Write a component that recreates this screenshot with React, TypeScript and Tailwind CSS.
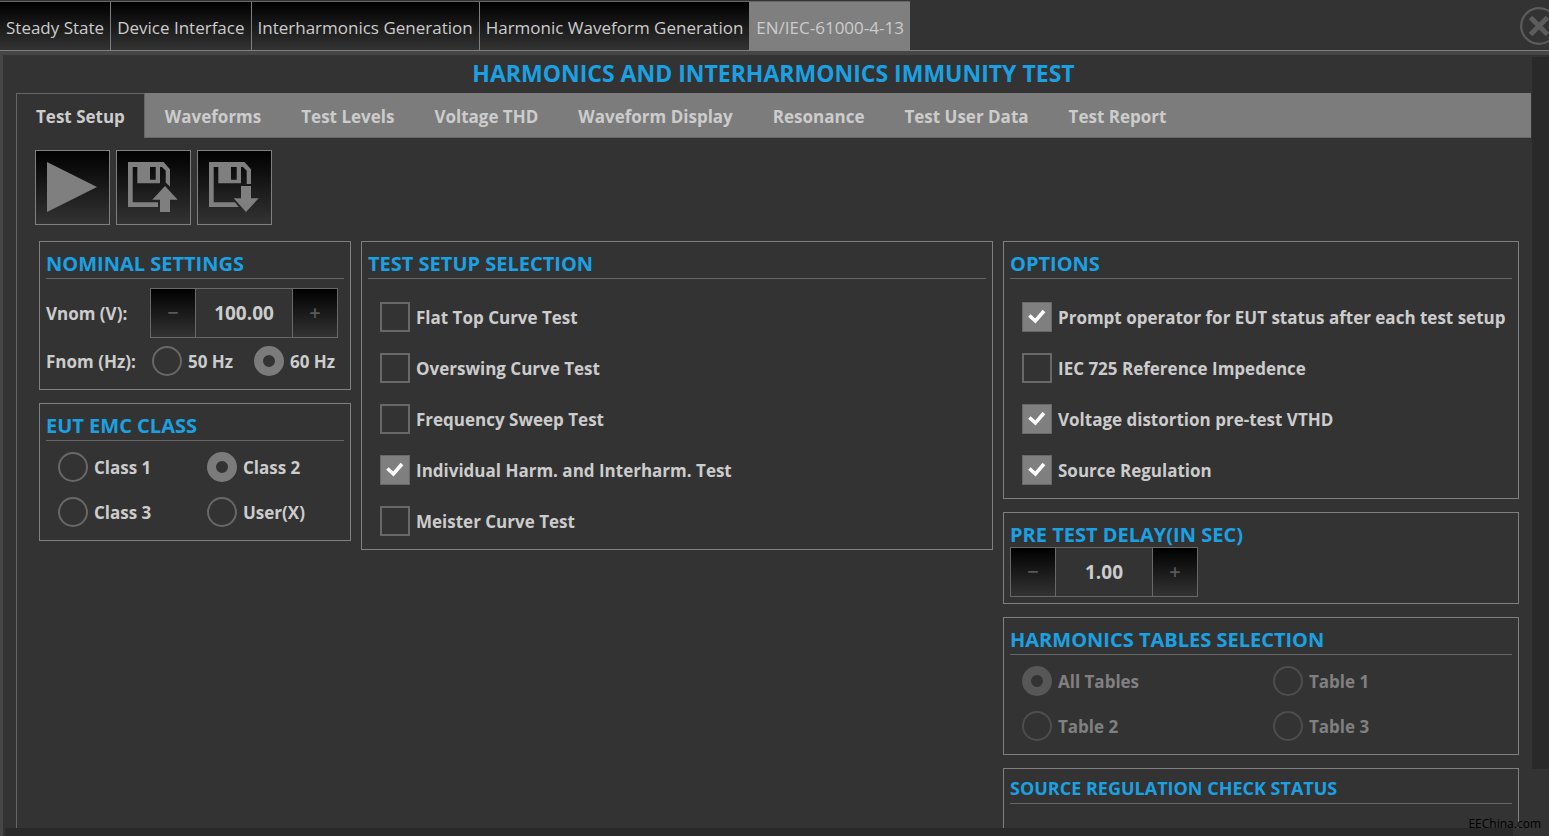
import { useState, type ReactNode } from "react";
import clsx from "clsx";

const MODES = [
  "Steady State",
  "Device Interface",
  "Interharmonics Generation",
  "Harmonic Waveform Generation",
  "EN/IEC-61000-4-13",
];

const TABS = [
  "Test Setup",
  "Waveforms",
  "Test Levels",
  "Voltage THD",
  "Waveform Display",
  "Resonance",
  "Test User Data",
  "Test Report",
];

const TESTS = [
  { label: "Flat Top Curve Test", on: false },
  { label: "Overswing Curve Test", on: false },
  { label: "Frequency Sweep Test", on: false },
  { label: "Individual Harm. and Interharm. Test", on: true },
  { label: "Meister Curve Test", on: false },
];

const OPTIONS = [
  { label: "Prompt operator for EUT status after each test setup", on: true },
  { label: "IEC 725 Reference Impedence", on: false },
  { label: "Voltage distortion pre-test VTHD", on: true },
  { label: "Source Regulation", on: true },
];

const FLOPPY_LABEL = "M9.3 0H32V21.3H9.3ZM22 5V17.7H27.7V5Z";

function PlayIcon() {
  return (
    <svg viewBox="0 0 50 50" className="h-[50px] w-[50px] fill-[#7f7f7f]" aria-hidden>
      <path d="M0 0L50 25L0 50Z" />
    </svg>
  );
}

function LoadIcon() {
  return (
    <svg viewBox="0 0 50 50" className="h-[50px] w-[50px] fill-[#7f7f7f]" aria-hidden>
      <path d="M0 0H35.5L42 7.3V24.7L37.7 20.5V8.7L34 5H4.7V40.3H30V45H0Z" />
      <path fillRule="evenodd" d={FLOPPY_LABEL} />
      <path d="M37 24L49.7 37.7H42V50H32V37.7H24.3Z" />
    </svg>
  );
}

function SaveIcon() {
  return (
    <svg viewBox="0 0 50 50" className="h-[50px] w-[50px] fill-[#7f7f7f]" aria-hidden>
      <path d="M0 0H35.5L42 7.3V22H37.7V8.7L34 5H4.7V40.3H26L29.7 45H0Z" />
      <path fillRule="evenodd" d={FLOPPY_LABEL} />
      <path d="M32 24H42V36.3H49.7L37 50L24.7 36.3H32Z" />
    </svg>
  );
}

function ToolButton({ label, children }: { label: string; children: ReactNode }) {
  return (
    <button
      type="button"
      aria-label={label}
      className="flex h-[75px] w-[75px] items-start border border-[#7f7f7f] bg-linear-to-b/srgb from-black to-[#333333] p-[11px]"
    >
      {children}
    </button>
  );
}

function Panel({ title, children }: { title: string; children?: ReactNode }) {
  return (
    <section className="border border-[#7f7f7f] px-1.5 pb-[13px]">
      <h2 className="flex h-[37px] items-center border-b border-[#666666] pt-2 text-[20px] leading-6 font-bold text-[#1ba1e2]">
        {title}
      </h2>
      {children}
    </section>
  );
}

function Check({ label, on }: { label: string; on: boolean }) {
  return (
    <label className="flex items-center gap-1.5 pl-3">
      <span className="relative h-[30px] w-[30px] shrink-0">
        <input
          type="checkbox"
          defaultChecked={on}
          className="peer block h-[30px] w-[30px] appearance-none border-2 border-[#686868] checked:border checked:bg-[#7f7f7f]"
        />
        <svg
          viewBox="0 0 30 30"
          className="pointer-events-none absolute inset-0 hidden fill-none stroke-white stroke-[3.6] peer-checked:block"
          aria-hidden
        >
          <path d="M7.4 13.5L13.4 19L22 9" />
        </svg>
      </span>
      <span className="pt-0.5">{label}</span>
    </label>
  );
}

function Radio({ name, label, on, disabled }: { name: string; label: string; on?: boolean; disabled?: boolean }) {
  return (
    <label className={clsx("flex items-center gap-1.5", disabled && "opacity-50")}>
      <input
        type="radio"
        name={name}
        defaultChecked={on}
        disabled={disabled}
        className="block h-[30px] w-[30px] shrink-0 appearance-none rounded-full border-2 border-[#686868] checked:border-[9px] checked:border-[#7b7b7b]"
      />
      <span className="pt-0.5">{label}</span>
    </label>
  );
}

function Stepper({ id, label, value }: { id: string; label: string; value: string }) {
  const side =
    "w-[45px] shrink-0 bg-linear-to-b/srgb from-black to-[#333333] text-[20px] leading-6 font-semibold text-[#585858]";
  return (
    <div className="flex h-[50px] w-[188px] shrink-0 border border-[#686868]">
      <button type="button" aria-label={`Decrease ${label}`} className={clsx(side, "border-r border-[#686868]")}>
        −
      </button>
      <input
        id={id}
        aria-label={label}
        defaultValue={value}
        className="min-w-0 flex-1 bg-transparent text-center text-[19px] outline-none"
      />
      <button type="button" aria-label={`Increase ${label}`} className={clsx(side, "border-l border-[#686868]")}>
        +
      </button>
    </div>
  );
}

export default function App() {
  const [tab, setTab] = useState(TABS[0]);

  return (
    <div className="relative flex h-screen flex-col overflow-hidden bg-[#333333] font-['Open_Sans','Noto_Sans',sans-serif] text-[17px] leading-6 font-bold text-[#cccccc]">
      <header className="flex h-[51px] shrink-0 items-center overflow-hidden border-b border-[#7f7f7f] pt-px">
        <nav className="flex h-full shrink-0 border-t border-[#666666] font-normal">
          {MODES.map((mode, i) => (
            <button
              key={mode}
              type="button"
              className={clsx(
                "px-1.5 pt-1 whitespace-nowrap",
                i === MODES.length - 1
                  ? "bg-[#7f7f7f]"
                  : "border-r border-[#7f7f7f] bg-linear-to-b/srgb from-black to-[#333333]",
              )}
            >
              {mode}
            </button>
          ))}
        </nav>
        <button type="button" aria-label="Close" className="-mr-[9px] ml-auto shrink-0">
          <svg viewBox="0 0 38 38" className="h-[38px] w-[38px] fill-none stroke-[#5c5c5c]" aria-hidden>
            <circle cx="19" cy="19" r="17.8" strokeWidth="2.2" />
            <path d="M10.5 10.5L27.5 27.5M27.5 10.5L10.5 27.5" strokeWidth="5" />
          </svg>
        </button>
      </header>

      <main className="flex min-h-0 flex-1 flex-col border-t-4 border-l-3 border-[#464646]">
        <div className="flex min-h-0 flex-1">
          <div className="flex min-w-0 flex-1 flex-col overflow-hidden pr-px pl-[13px]">
            <h1 className="pt-1 pb-1.5 text-center text-[23px] leading-7 text-[#1ba1e2]">
              HARMONICS AND INTERHARMONICS IMMUNITY TEST
            </h1>

            <div className="flex min-h-0 flex-1 flex-col overflow-hidden border-l border-[#666666]">
              <div role="tablist" className="flex h-[45px] shrink-0 border-b border-[#666666] bg-[#7c7c7c]">
                {TABS.map((name) => (
                  <button
                    key={name}
                    type="button"
                    role="tab"
                    aria-selected={tab === name}
                    onClick={() => setTab(name)}
                    className={clsx(
                      "whitespace-nowrap",
                      tab === name
                        ? "-mb-px border-t border-r border-[#666666] bg-[#333333] px-[19px] pt-0.5"
                        : "px-5 pt-1",
                    )}
                  >
                    {name}
                  </button>
                ))}
              </div>

              <div className="flex shrink-0 gap-1.5 pt-3 pb-4 pl-[18px]">
                <ToolButton label="Run test">
                  <PlayIcon />
                </ToolButton>
                <ToolButton label="Load setup">
                  <LoadIcon />
                </ToolButton>
                <ToolButton label="Save setup">
                  <SaveIcon />
                </ToolButton>
              </div>

              <div className="flex items-start gap-2.5 pr-3 pl-[22px]">
                <div className="flex w-[312px] shrink-0 flex-col gap-[13px]">
                  <Panel title="NOMINAL SETTINGS">
                    <div className="flex items-center justify-between pt-[9px] pr-1.5">
                      <label htmlFor="vnom" className="pt-0.5">
                        Vnom (V):
                      </label>
                      <Stepper id="vnom" label="Vnom (V)" value="100.00" />
                    </div>
                    <div className="grid grid-cols-[106px_102px_1fr] items-center pt-2 whitespace-nowrap">
                      <span className="pt-0.5">Fnom (Hz):</span>
                      <Radio name="fnom" label="50 Hz" />
                      <Radio name="fnom" label="60 Hz" on />
                    </div>
                  </Panel>
                  <Panel title="EUT EMC CLASS">
                    <div className="grid grid-cols-2 gap-y-[15px] pt-[11px] *:pl-3">
                      <Radio name="emc" label="Class 1" />
                      <Radio name="emc" label="Class 2" on />
                      <Radio name="emc" label="Class 3" />
                      <Radio name="emc" label="User(X)" />
                    </div>
                  </Panel>
                </div>

                <div className="min-w-0 flex-1">
                  <Panel title="TEST SETUP SELECTION">
                    <div className="flex flex-col gap-[21px] pt-[23px]">
                      {TESTS.map((t) => (
                        <Check key={t.label} label={t.label} on={t.on} />
                      ))}
                    </div>
                  </Panel>
                </div>

                <div className="flex w-[516px] shrink-0 flex-col gap-[13px]">
                  <Panel title="OPTIONS">
                    <div className="flex flex-col gap-[21px] pt-[23px] whitespace-nowrap">
                      {OPTIONS.map((o) => (
                        <Check key={o.label} label={o.label} on={o.on} />
                      ))}
                    </div>
                  </Panel>
                  <section className="border border-[#7f7f7f] px-1.5 pb-1.5">
                    <h2 className="flex h-[34px] items-center pt-2.5 text-[20px] leading-6 text-[#1ba1e2]">
                      PRE TEST DELAY(IN SEC)
                    </h2>
                    <Stepper id="delay" label="Pre test delay" value="1.00" />
                  </section>
                  <Panel title="HARMONICS TABLES SELECTION">
                    <div className="grid grid-cols-2 gap-y-[15px] pt-[11px] *:pl-3">
                      <Radio name="tables" label="All Tables" on disabled />
                      <Radio name="tables" label="Table 1" disabled />
                      <Radio name="tables" label="Table 2" disabled />
                      <Radio name="tables" label="Table 3" disabled />
                    </div>
                  </Panel>
                  <section className="h-40 border border-[#7f7f7f] px-1.5">
                    <h2 className="flex h-[35px] items-center border-b border-[#666666] pt-1 text-[18px] leading-6 text-[#1ba1e2]">
                      SOURCE REGULATION CHECK STATUS
                    </h2>
                  </section>
                </div>
              </div>
            </div>
          </div>
          <div className="mt-0.5 mb-[59px] w-[17px] shrink-0 bg-[#292929]" />
        </div>
        <div className="mr-9 ml-0.5 h-2 shrink-0 bg-[#292929]" />
      </main>

      <span className="absolute right-2 bottom-0.5 text-[12px] leading-5 font-normal text-black">EEChina.com</span>
    </div>
  );
}
